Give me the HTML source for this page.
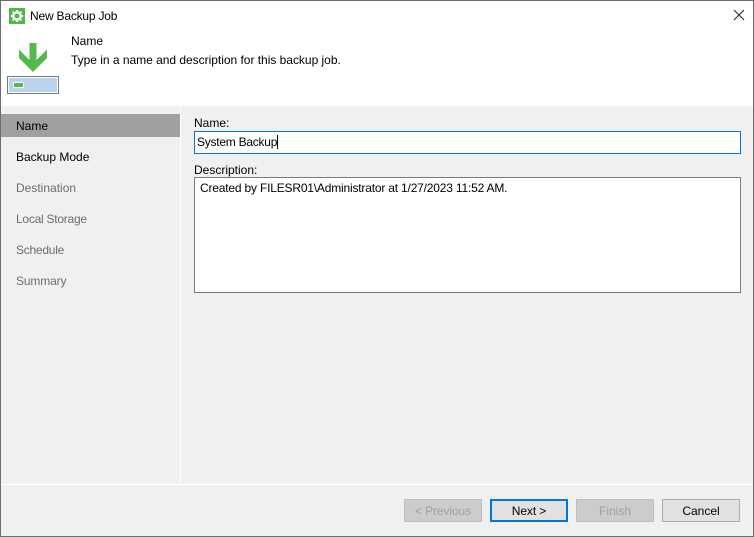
<!DOCTYPE html>
<html><head><meta charset="utf-8"><style>
html,body{margin:0;padding:0;background:#fff}
#w{position:relative;width:754px;height:537px;overflow:hidden;background:#f0f0f0;font-family:"Liberation Sans",sans-serif;font-size:12px;color:#000}
#w div{position:absolute;box-sizing:border-box;white-space:nowrap}
.t{line-height:16px;height:16px}
.n{left:16px;color:#6d6d6d}
.b{top:499px;width:78px;height:23px;text-align:center;line-height:23px;background:#e1e1e1;border:1px solid #adadad}
.d{background:#ccc;border-color:#bfbfbf;color:#a0a0a0}
</style></head><body><div id="w">
<div style="left:0;top:0;width:754px;height:106px;background:#fff"></div>
<svg style="position:absolute;left:9px;top:8px" width="16" height="16" viewBox="0 0 16 16"><rect width="16" height="16" fill="#4fb848"/><circle cx="8" cy="8" r="3.6" fill="none" stroke="#fff" stroke-width="2.2"/><path d="M8 2v3M8 11v3M2 8h3M11 8h3M3.7 3.7l2 2M10.3 10.3l2 2M12.3 3.7l-2 2M5.7 10.3l-2 2" stroke="#fff" stroke-width="2.2"/></svg>
<div class="t" style="left:30px;top:8px;letter-spacing:-.2px">New Backup Job</div>
<svg style="position:absolute;left:733px;top:9px" width="12" height="12" viewBox="0 0 12 12"><path d="M1 1l10 10M11 1L1 11" stroke="#222" stroke-width="1" fill="none"/></svg>
<div class="t" style="left:71px;top:33px">Name</div>
<div class="t" style="left:71px;top:52px;letter-spacing:-.02px">Type in a name and description for this backup job.</div>
<svg style="position:absolute;left:19px;top:43px" width="28" height="29" viewBox="0 0 28 29"><path d="M10.5 0h7v17L28 6.500v8.500L14 29 0 15V6.500L10.500 17z" fill="#55b84a"/></svg>
<div style="left:7px;top:76px;width:52px;height:18px;background:#bad4ee;border:1px solid #7a7a7a;box-shadow:inset 0 0 0 1px #fff"></div>
<div style="left:13px;top:82px;width:11px;height:6px;background:#55b84a;border:1px solid #fff"></div>
<div style="left:1px;top:114px;width:179px;height:23px;background:#a0a0a0"></div>
<div style="left:180px;top:106px;width:1px;height:378px;background:#fff"></div>
<div style="left:1px;top:484px;width:752px;height:1px;background:#fff"></div>
<div class="t n" style="top:118px;color:#000">Name</div>
<div class="t n" style="top:149px;color:#000">Backup Mode</div>
<div class="t n" style="top:180px">Destination</div>
<div class="t n" style="top:211px;letter-spacing:-.25px">Local Storage</div>
<div class="t n" style="top:242px;letter-spacing:-.25px">Schedule</div>
<div class="t n" style="top:273px;letter-spacing:-.15px">Summary</div>
<div class="t" style="left:194px;top:115px">Name:</div>
<div class="t" style="left:197px;top:134px;z-index:2;letter-spacing:-.25px">System Backup</div>
<div style="left:194px;top:131px;width:547px;height:23px;background:#fff;border:1px solid #0078d7"></div>
<div style="left:277px;top:135px;width:1px;height:14px;background:#000;z-index:2"></div>
<div class="t" style="left:194px;top:162px">Description:</div>
<div style="left:194px;top:177px;width:547px;height:116px;background:#fff;border:1px solid #7a7a7a"></div>
<div class="t" style="left:200px;top:180px;z-index:2;letter-spacing:-.19px">Created by FILESR01\Administrator at 1/27/2023 11:52 AM.</div>
<div class="b d" style="left:404px;letter-spacing:-.1px">&lt; Previous</div>
<div class="b" style="left:490px;border:2px solid #0078d7;line-height:21px;letter-spacing:-.1px">Next &gt;</div>
<div class="b d" style="left:576px">Finish</div>
<div class="b" style="left:662px">Cancel</div>
<div style="left:0;top:0;width:754px;height:537px;border:1px solid #6d6d6d"></div>
</div></body></html>
